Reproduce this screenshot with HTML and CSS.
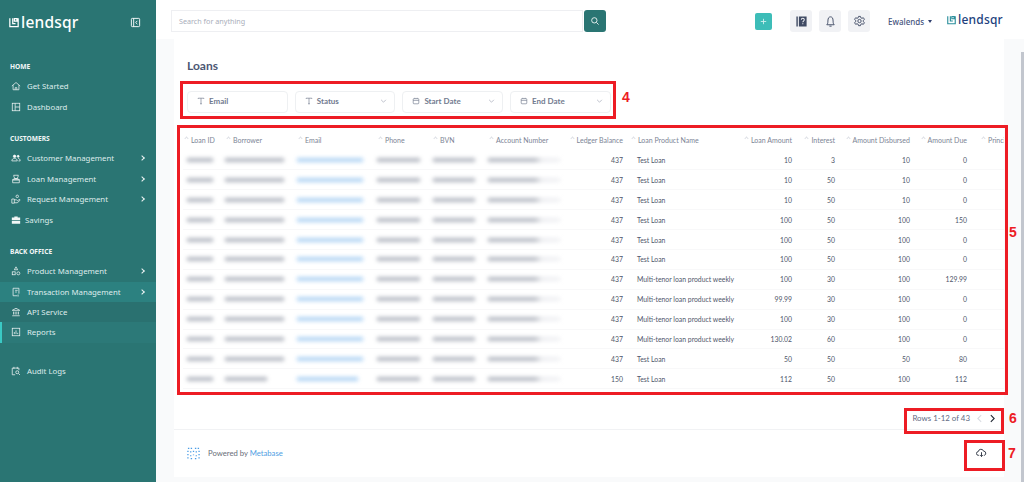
FILE: index.html
```html
<!DOCTYPE html>
<html lang="en">
<head>
<meta charset="utf-8">
<title>Loans</title>
<link rel="stylesheet" href="styles.css">
</head>
<body>
<div class="app">
  <aside class="sidebar">
    <div class="brand">
      <div class="logo">
        <svg class="logo-mark" viewBox="0 0 12 12"><path d="M1 1v10h10V1M4.500 1v6.300h3.300M6.500 1.300h3v3h-3z" fill="none" stroke="#fff" stroke-width="1.500"/></svg>
        <span class="logo-text">lendsqr</span>
      </div>
      <svg class="collapse" viewBox="0 0 12 12"><rect x="1.500" y="1.500" width="9" height="9" rx="1" fill="none" stroke="#fff"/><path d="M4 1.500v9" stroke="#fff"/><path d="M8 4.200 6.200 6 8 7.800" fill="none" stroke="#fff"/></svg>
    </div>

    <div class="nav-heading">HOME</div>
    <a class="nav-item"><svg class="ni" viewBox="0 0 12 12"><path d="M1 6 6 1.800 11 6M2.500 5v5.500h7V5M5 10.500V8h2v2.500" /></svg><span>Get Started</span></a>
    <a class="nav-item"><svg class="ni" viewBox="0 0 12 12"><rect x="1.500" y="1.500" width="9" height="9"/><path d="M5 1.500v9M5 6h5.500"/></svg><span>Dashboard</span></a>

    <div class="nav-heading gap">CUSTOMERS</div>
    <a class="nav-item"><svg class="ni" viewBox="0 0 12 12"><circle cx="4.300" cy="4" r="1.500" fill="#fff"/><circle cx="8.600" cy="4" r="1.200" fill="#fff"/><path d="M1 9.500c0-2 1.500-3 3.300-3s3.200 1 3.200 3zM8.500 6.500c1.500 0 2.500 1 2.500 3H9"/></svg><span>Customer Management</span><i class="chev"></i></a>
    <a class="nav-item"><svg class="ni" viewBox="0 0 12 12"><path d="M3 1.500h6M3.500 1.500v2L5 5.500h2l1.500-2v-2M2 7h8v3.500H2zM3.500 5.500h5L10 7H2z"/></svg><span>Loan Management</span><i class="chev"></i></a>
    <a class="nav-item"><svg class="ni" viewBox="0 0 12 12"><circle cx="7.500" cy="2.800" r="1.500"/><path d="M1 6h3v5H1zM4 7h2.500l1 1 3-1.500V8l-3 2.500H4"/></svg><span>Request Management</span><i class="chev"></i></a>
    <a class="nav-item savings"><svg class="ni solid" viewBox="0 0 12 12"><path d="M4 3V1.800h4V3h3v3H1V3zM1 6.800h10V10.500H1z"/></svg><span>Savings</span></a>

    <div class="nav-heading gap">BACK OFFICE</div>
    <a class="nav-item"><svg class="ni" viewBox="0 0 12 12"><path d="M6 1 8 4.500H4z"/><rect x="1.500" y="7" width="3.500" height="3.500"/><circle cx="8.800" cy="8.800" r="1.800"/></svg><span>Product Management</span><i class="chev"></i></a>
    <a class="nav-item active"><svg class="ni" viewBox="0 0 12 12"><path d="M9.500 8V1.500h-7v9h5M5 4h3M5 6h2M8.500 9v2.500"/></svg><span>Transaction Management</span><i class="chev"></i></a>
    <a class="nav-item shade"><svg class="ni" viewBox="0 0 12 12"><path d="M1.500 4 6 1.500 10.500 4zM3 5.500v3.500M5 5.500v3.500M7 5.500v3.500M9 5.500v3.500M1.500 10.500h9"/></svg><span>API Service</span></a>
    <a class="nav-item current"><svg class="ni" viewBox="0 0 12 12"><rect x="1.500" y="1.500" width="9" height="9"/><path d="M4 8.500V6M6 8.500V4M8 8.500V7"/></svg><span>Reports</span></a>

    <a class="nav-item audit"><svg class="ni" viewBox="0 0 12 12"><path d="M5 10.500H1.500v-8h8v2.500M3.500 1v2.500M7.500 1v2.500"/><circle cx="7.500" cy="7.500" r="1.800"/><path d="m9 9 1.800 1.800"/></svg><span>Audit Logs</span></a>
  </aside>

  <div class="workspace">
    <header class="topbar">
      <div class="search">
        <div class="search-input">Search for anything</div>
        <button class="search-btn"><svg viewBox="0 0 12 12"><circle cx="5.200" cy="5.200" r="3.200"/><path d="m7.800 7.800 2.500 2.500"/></svg></button>
      </div>
      <div class="top-actions">
        <button class="plus"><svg viewBox="0 0 10 10"><path d="M5 2v6M2 5h6"/></svg></button>
        <div class="tools">
          <button class="tool"><svg viewBox="0 0 14 14"><path d="M1.500 1.500h1.500v11H1.500zM4.200 1.500h8.300v11H4.200z" fill="#3f4a63"/><path d="M6.800 5.200c0-2.300 3.200-2.300 3.200 0 0 1.400-1.600 1.300-1.600 2.600M8.400 9v1" fill="none" stroke="#f1f2f5" stroke-width="1.100"/></svg></button>
          <button class="tool"><svg viewBox="0 0 14 14"><path d="M3 10.500h8c-1-1-1.200-2-1.200-4C9.800 3 8.500 2 7 2S4.200 3 4.200 6.500c0 2-.2 3-1.200 4zM5.800 12h2.400" fill="none" stroke="#3f4a63"/></svg></button>
          <button class="tool"><svg viewBox="0 0 14 14"><path d="M6 1.500h2l.4 1.500 1.300.6 1.400-.7 1.200 1.700-1.100 1.100v1.600l1.100 1.100-1.200 1.700-1.400-.7-1.300.6-.4 1.500H6l-.4-1.500-1.300-.6-1.400.7-1.200-1.700 1.100-1.100V5.700L1.700 4.600l1.200-1.700 1.400.7 1.300-.6z" fill="none" stroke="#3f4a63"/><circle cx="7" cy="6.500" r="1.800" fill="none" stroke="#3f4a63"/></svg></button>
        </div>
        <div class="account"><span>Ewalends</span><i class="caret"></i></div>
        <div class="logo small">
          <svg class="logo-mark" viewBox="0 0 12 12"><path d="M1 1v10h10V1M4.500 1v6.300h3.300M6.500 1.300h3v3h-3z" fill="none" stroke="#2b8f9c" stroke-width="1.500"/></svg>
          <span class="logo-text">lendsqr</span>
        </div>
      </div>
    </header>

    <main class="page">
      <section class="card">
        <h1 class="title">Loans</h1>
        <div class="filters">
          <div class="filter"><svg class="f-ico" viewBox="0 0 10 10"><path d="M1.500 2.500V1.500h7v1M5 1.500v7M3.800 8.500h2.400"/></svg><span>Email</span></div>
          <div class="filter"><svg class="f-ico" viewBox="0 0 10 10"><path d="M1.500 2.500V1.500h7v1M5 1.500v7M3.800 8.500h2.400"/></svg><span>Status</span><svg class="f-chev" viewBox="0 0 8 5"><path d="m1 1 3 3 3-3"/></svg></div>
          <div class="filter"><svg class="f-ico" viewBox="0 0 10 10"><rect x="1.500" y="2" width="7" height="6.500" rx="1"/><path d="M1.500 4.200h7M3.500 1v1M6.500 1v1"/></svg><span>Start Date</span><svg class="f-chev" viewBox="0 0 8 5"><path d="m1 1 3 3 3-3"/></svg></div>
          <div class="filter"><svg class="f-ico" viewBox="0 0 10 10"><rect x="1.500" y="2" width="7" height="6.500" rx="1"/><path d="M1.500 4.200h7M3.500 1v1M6.500 1v1"/></svg><span>End Date</span><svg class="f-chev" viewBox="0 0 8 5"><path d="m1 1 3 3 3-3"/></svg></div>
        </div>

        <div class="table-wrap">
          <table class="grid">
            <colgroup><col class="c1"><col class="c2"><col class="c3"><col class="c4"><col class="c5"><col class="c6"><col class="c7"><col class="c8"><col class="c9"><col class="c10"><col class="c11"><col class="c12"><col class="c13"></colgroup>
            <thead><tr><th>Loan ID</th><th>Borrower</th><th>Email</th><th>Phone</th><th>BVN</th><th>Account Number</th><th class="r">Ledger Balance</th><th>Loan Product Name</th><th class="r">Loan Amount</th><th class="r">Interest</th><th class="r">Amount Disbursed</th><th class="r">Amount Due</th><th>Princi</th></tr></thead>
            <tbody>
              <tr><td><i class="b b-id"></i></td><td><i class="b b-name"></i></td><td><i class="b b-mail"></i></td><td><i class="b b-ph"></i></td><td><i class="b b-bvn"></i></td><td><i class="b b-acc"></i></td><td class="r">437</td><td>Test Loan</td><td class="r">10</td><td class="r">3</td><td class="r">10</td><td class="r">0</td><td></td></tr>
              <tr><td><i class="b b-id"></i></td><td><i class="b b-name"></i></td><td><i class="b b-mail"></i></td><td><i class="b b-ph"></i></td><td><i class="b b-bvn"></i></td><td><i class="b b-acc"></i></td><td class="r">437</td><td>Test Loan</td><td class="r">10</td><td class="r">50</td><td class="r">10</td><td class="r">0</td><td></td></tr>
              <tr><td><i class="b b-id"></i></td><td><i class="b b-name"></i></td><td><i class="b b-mail"></i></td><td><i class="b b-ph"></i></td><td><i class="b b-bvn"></i></td><td><i class="b b-acc"></i></td><td class="r">437</td><td>Test Loan</td><td class="r">10</td><td class="r">50</td><td class="r">10</td><td class="r">0</td><td></td></tr>
              <tr><td><i class="b b-id"></i></td><td><i class="b b-name"></i></td><td><i class="b b-mail"></i></td><td><i class="b b-ph"></i></td><td><i class="b b-bvn"></i></td><td><i class="b b-acc"></i></td><td class="r">437</td><td>Test Loan</td><td class="r">100</td><td class="r">50</td><td class="r">100</td><td class="r">150</td><td></td></tr>
              <tr><td><i class="b b-id"></i></td><td><i class="b b-name"></i></td><td><i class="b b-mail"></i></td><td><i class="b b-ph"></i></td><td><i class="b b-bvn"></i></td><td><i class="b b-acc"></i></td><td class="r">437</td><td>Test Loan</td><td class="r">100</td><td class="r">50</td><td class="r">100</td><td class="r">0</td><td></td></tr>
              <tr><td><i class="b b-id"></i></td><td><i class="b b-name"></i></td><td><i class="b b-mail"></i></td><td><i class="b b-ph"></i></td><td><i class="b b-bvn"></i></td><td><i class="b b-acc"></i></td><td class="r">437</td><td>Test Loan</td><td class="r">100</td><td class="r">50</td><td class="r">100</td><td class="r">0</td><td></td></tr>
              <tr><td><i class="b b-id"></i></td><td><i class="b b-name"></i></td><td><i class="b b-mail"></i></td><td><i class="b b-ph"></i></td><td><i class="b b-bvn"></i></td><td><i class="b b-acc"></i></td><td class="r">437</td><td>Multi-tenor loan product weekly</td><td class="r">100</td><td class="r">30</td><td class="r">100</td><td class="r">129.99</td><td></td></tr>
              <tr><td><i class="b b-id"></i></td><td><i class="b b-name"></i></td><td><i class="b b-mail"></i></td><td><i class="b b-ph"></i></td><td><i class="b b-bvn"></i></td><td><i class="b b-acc"></i></td><td class="r">437</td><td>Multi-tenor loan product weekly</td><td class="r">99.99</td><td class="r">30</td><td class="r">100</td><td class="r">0</td><td></td></tr>
              <tr><td><i class="b b-id"></i></td><td><i class="b b-name"></i></td><td><i class="b b-mail"></i></td><td><i class="b b-ph"></i></td><td><i class="b b-bvn"></i></td><td><i class="b b-acc"></i></td><td class="r">437</td><td>Multi-tenor loan product weekly</td><td class="r">100</td><td class="r">30</td><td class="r">100</td><td class="r">0</td><td></td></tr>
              <tr><td><i class="b b-id"></i></td><td><i class="b b-name"></i></td><td><i class="b b-mail"></i></td><td><i class="b b-ph"></i></td><td><i class="b b-bvn"></i></td><td><i class="b b-acc"></i></td><td class="r">437</td><td>Multi-tenor loan product weekly</td><td class="r">130.02</td><td class="r">60</td><td class="r">100</td><td class="r">0</td><td></td></tr>
              <tr><td><i class="b b-id"></i></td><td><i class="b b-name"></i></td><td><i class="b b-mail"></i></td><td><i class="b b-ph"></i></td><td><i class="b b-bvn"></i></td><td><i class="b b-acc"></i></td><td class="r">437</td><td>Test Loan</td><td class="r">50</td><td class="r">50</td><td class="r">50</td><td class="r">80</td><td></td></tr>
              <tr><td><i class="b b-id"></i></td><td><i class="b b-short"></i></td><td><i class="b b-mail-s"></i></td><td><i class="b b-ph"></i></td><td><i class="b b-bvn"></i></td><td><i class="b b-acc"></i></td><td class="r">150</td><td>Test Loan</td><td class="r">112</td><td class="r">50</td><td class="r">100</td><td class="r">112</td><td></td></tr>
            </tbody>
          </table>
        </div>

        <div class="pager">
          <span>Rows 1-12 of 43</span>
          <svg class="pg off" viewBox="0 0 6 10"><path d="M5 1 1 5l4 4"/></svg>
          <svg class="pg" viewBox="0 0 6 10"><path d="m1 1 4 4-4 4"/></svg>
        </div>

        <footer class="foot">
          <div class="powered">
            <svg class="mb" viewBox="0 0 14 14"><path d="M1 1.500h1.500M4 1.500h1.500M8.500 1.500H10M11.500 1.500H13M1 4v1.500M1 7.500V9M1 11v1.500M13 4v1.500M13 7.500V9M13 11v1.500M4 4.500v1.500M7 4v1.500M10 4.500v1.500M4 9v1M10 9v1M7 8v1M4 12.500h1.500M8.500 12.500H10" /></svg>
            <span>Powered by <b>Metabase</b></span>
          </div>
          <svg class="dl" viewBox="0 0 14 12"><path d="M4 9H3.200a2.400 2.400 0 0 1-.3-4.800 3.500 3.500 0 0 1 6.800-.5A2.700 2.700 0 0 1 10.500 9H10M7 5v5.500M5.300 8.800 7 10.500l1.700-1.700"/></svg>
        </footer>
      </section>
    </main>
  </div>

  <div class="scrollbar"></div>
  <div class="mark m4"></div><b class="mark-n n4">4</b>
  <div class="mark m5"></div><b class="mark-n n5">5</b>
  <div class="mark m6"></div><b class="mark-n n6">6</b>
  <div class="mark m7"></div><b class="mark-n n7">7</b>
</div>
</body>
</html>
```
FILE: styles.css
```css
* { box-sizing: border-box; }
html, body { margin: 0; height: 100%; overflow: hidden; }
body { font-family: "Lato", "Liberation Sans", sans-serif; color: #4c5773; background: #fff; }
button { border: 0; padding: 0; display: flex; align-items: center; justify-content: center; }

.app { position: relative; display: flex; width: 1024px; height: 482px; overflow: hidden; }

/* Sidebar */
.sidebar { width: 156px; flex: none; background: #2a7573; color: #e9f1f1; font-family: "Noto Sans", sans-serif; }
.brand { height: 56px; padding: 0 15px 12px 9px; display: flex; align-items: center; justify-content: space-between; }
.logo { display: flex; align-items: center; gap: 2px; color: #fff; }
.logo-mark { width: 10px; height: 11px; flex: none; }
.logo-text { font-family: "Noto Sans", sans-serif; font-size: 15.500px; line-height: 20px; font-weight: 500; letter-spacing: .2px; }
.collapse { width: 11px; height: 11px; }
.nav-heading { height: 20px; line-height: 21px; padding-left: 10px; font-size: 6.600px; font-weight: 700; color: #f2f7f7; }
.nav-heading.gap { margin-top: 11.400px; }
.nav-item { display: flex; align-items: center; height: 20.400px; padding: 0 10px 0 11px; font-size: 7.800px; color: #dfecec; }
.nav-item > span { margin-left: 6px; flex: 1; white-space: nowrap; }
.ni { width: 10px; height: 10px; flex: none; fill: none; stroke: #f1f6f6; stroke-width: .9; }
.ni.solid { fill: #f1f6f6; stroke: none; }
.savings > span { margin-left: 4px; }
.chev { width: 4px; height: 4px; border-top: 1px solid #eef5f5; border-right: 1px solid #eef5f5; transform: rotate(45deg); margin-right: 2px; }
.nav-item.active { background: #2c8180; }
.nav-item.shade { background: #2a7170; }
.nav-item.current { background: #2c7978; box-shadow: inset 2px 0 0 #3ac9c4; }
.nav-item.audit { margin-top: 18px; }

/* Workspace */
.workspace { flex: 1; display: flex; flex-direction: column; min-width: 0; }
.topbar { height: 39px; flex: none; display: flex; align-items: center; justify-content: space-between; padding: 3px 22px 0 15px; background: #fff; box-shadow: 0 1px 2px rgba(0,0,0,.02); }
.search { display: flex; gap: 1px; }
.search-input { width: 412px; height: 22px; line-height: 20px; padding-left: 7px; border: 1px solid #eeeff2; font-family: "Noto Sans", sans-serif; font-size: 7.200px; color: #a9aeba; }
.search-btn { width: 22px; height: 22px; border-radius: 3px; background: #2a7573; }
.search-btn svg { width: 10px; height: 10px; fill: none; stroke: #fff; stroke-width: 1; }
.top-actions { display: flex; align-items: center; }
.plus { width: 17px; height: 17px; border-radius: 2px; background: #3dbdb8; margin-right: 18px; }
.plus svg { width: 9px; height: 9px; stroke: #cdeeed; stroke-width: 1; }
.tools { display: flex; gap: 7px; margin-right: 18px; }
.tool { width: 22px; height: 22px; border-radius: 3px; background: #f1f2f5; }
.tool svg { width: 13px; height: 13px; }
.account { display: flex; align-items: center; gap: 4px; width: 59px; font-family: "Noto Sans", sans-serif; font-size: 8px; font-weight: 500; color: #47567e; }
.caret { width: 0; height: 0; border-left: 2.500px solid transparent; border-right: 2.500px solid transparent; border-top: 3px solid #2f3f6e; }
.logo.small { color: #213f7d; width: 55px; margin-top: -3px; }
.logo.small .logo-mark { width: 9px; height: 10px; }
.logo.small .logo-text { font-size: 12px; letter-spacing: .2px; line-height: 16px; }

/* Main */
.page { flex: 1; min-height: 0; background: #f9fafb; padding: 0 20px 5px 18px; }
.card { height: 100%; background: #fff; display: flex; flex-direction: column; }
.title { margin: 0; padding: 20px 0 0 13px; height: 51.500px; font-size: 12px; line-height: 14px; font-weight: 700; color: #4c5773; }
.filters { display: flex; gap: 7px; padding-left: 13px; }
.filter { width: 100.700px; height: 22px; display: flex; align-items: center; padding: 0 7px 1px 9px; border: 1px solid #eef0f2; border-radius: 4px; font-size: 8px; font-weight: 700; color: #727b8f; }
.filter span { flex: 1; margin-left: 4px; }
.f-ico { width: 8px; height: 8px; fill: none; stroke: #6d7689; stroke-width: .8; flex: none; }
.f-chev { width: 7px; height: 4px; fill: none; stroke: #9aa1b0; stroke-width: .8; flex: none; }

/* Table */
.table-wrap { margin: 16.500px 0 0 9px; overflow: hidden; height: 260px; }
.grid { table-layout: fixed; border-collapse: collapse; width: 857px; font-size: 6.850px; }
.c1 { width: 42px; } .c2 { width: 72px; } .c3 { width: 80px; } .c4 { width: 55px; } .c5 { width: 56px; }
.c6 { width: 78px; } .c7 { width: 64px; } .c8 { width: 100px; } .c9 { width: 69px; } .c10 { width: 43px; }
.c11 { width: 75px; } .c12 { width: 57px; } .c13 { width: 66px; }
.grid th, .grid td { height: 19.900px; padding: 0 7px; text-align: left; white-space: nowrap; overflow: visible; }
.grid th { height: 21px; font-size: 7px; font-weight: 400; color: #7d8596; }
.grid th:last-child { padding-left: 13px; }
.grid th::before { content: ""; display: inline-block; width: 2px; height: 2px; margin: 0 3px 3px -5px; border-top: .5px solid #dcdfe4; border-left: .5px solid #dcdfe4; transform: rotate(45deg); }
.grid td { font-weight: 400; color: #50576b; border-bottom: 1px solid #f8f8f9; }
.grid .r { text-align: right; }
.b { display: block; height: 4px; background: #8f95a3; filter: blur(2px); opacity: .68; }
.b-id { width: 26px; margin-left: -3px; }
.b-name { width: 59px; margin-left: -7px; }
.b-short { width: 42px; margin-left: -7px; }
.b-mail { width: 66px; margin-left: -7px; background: #79b5ec; opacity: .6; }
.b-mail-s { width: 61px; margin-left: -7px; background: #79b5ec; opacity: .6; }
.b-ph { width: 43px; margin-left: -7px; }
.b-bvn { width: 42px; margin-left: -6px; }
.b-acc { width: 72px; margin-left: -7px; background: linear-gradient(90deg, #8f95a3 65%, #e3e4e9 75%, #e9eaee 100%); }

/* Pager and footer */
.pager { height: 21px; margin-top: 18.500px; padding-right: 9px; display: flex; align-items: center; justify-content: flex-end; font-size: 7.900px; color: #5f6a83; }
.pager span { margin-right: 7px; }
.pg { width: 5px; height: 9px; fill: none; stroke: #1f2633; stroke-width: 1.300; margin-left: 8px; }
.pg.off { stroke: #d9dce2; margin-left: 0; }
.foot { flex: 1; display: flex; align-items: center; justify-content: space-between; border-top: 1px solid #f1f2f4; padding: 0 17px 0 13px; }
.powered { display: flex; align-items: center; gap: 8px; font-size: 7.700px; color: #696e78; }
.powered b { font-weight: 400; color: #509ee3; }
.mb { width: 13px; height: 13px; fill: none; stroke: #4a9de6; stroke-width: 1.400; }
.dl { width: 11px; height: 10px; fill: none; stroke: #2f3644; stroke-width: 1.200; }

/* Scrollbar and annotation marks */
.scrollbar { position: absolute; right: 0; top: 52px; bottom: 0; width: 3px; background: #c2c6ce; }
.mark { position: absolute; border: 3px solid #ed1c24; }
.m4 { left: 180px; top: 81px; width: 436px; height: 38px; }
.m5 { left: 177px; top: 125px; width: 831px; height: 270px; }
.m6 { left: 904px; top: 408px; width: 100px; height: 26px; }
.m7 { left: 964px; top: 440px; width: 41px; height: 31px; }
.mark-n { position: absolute; font-family: "Liberation Sans", sans-serif; font-size: 14px; line-height: 14px; font-weight: 700; color: #ed1c24; }
.n4 { left: 622px; top: 90px; }
.n5 { left: 1009px; top: 225px; }
.n6 { left: 1009px; top: 411px; }
.n7 { left: 1008px; top: 446px; }
```
